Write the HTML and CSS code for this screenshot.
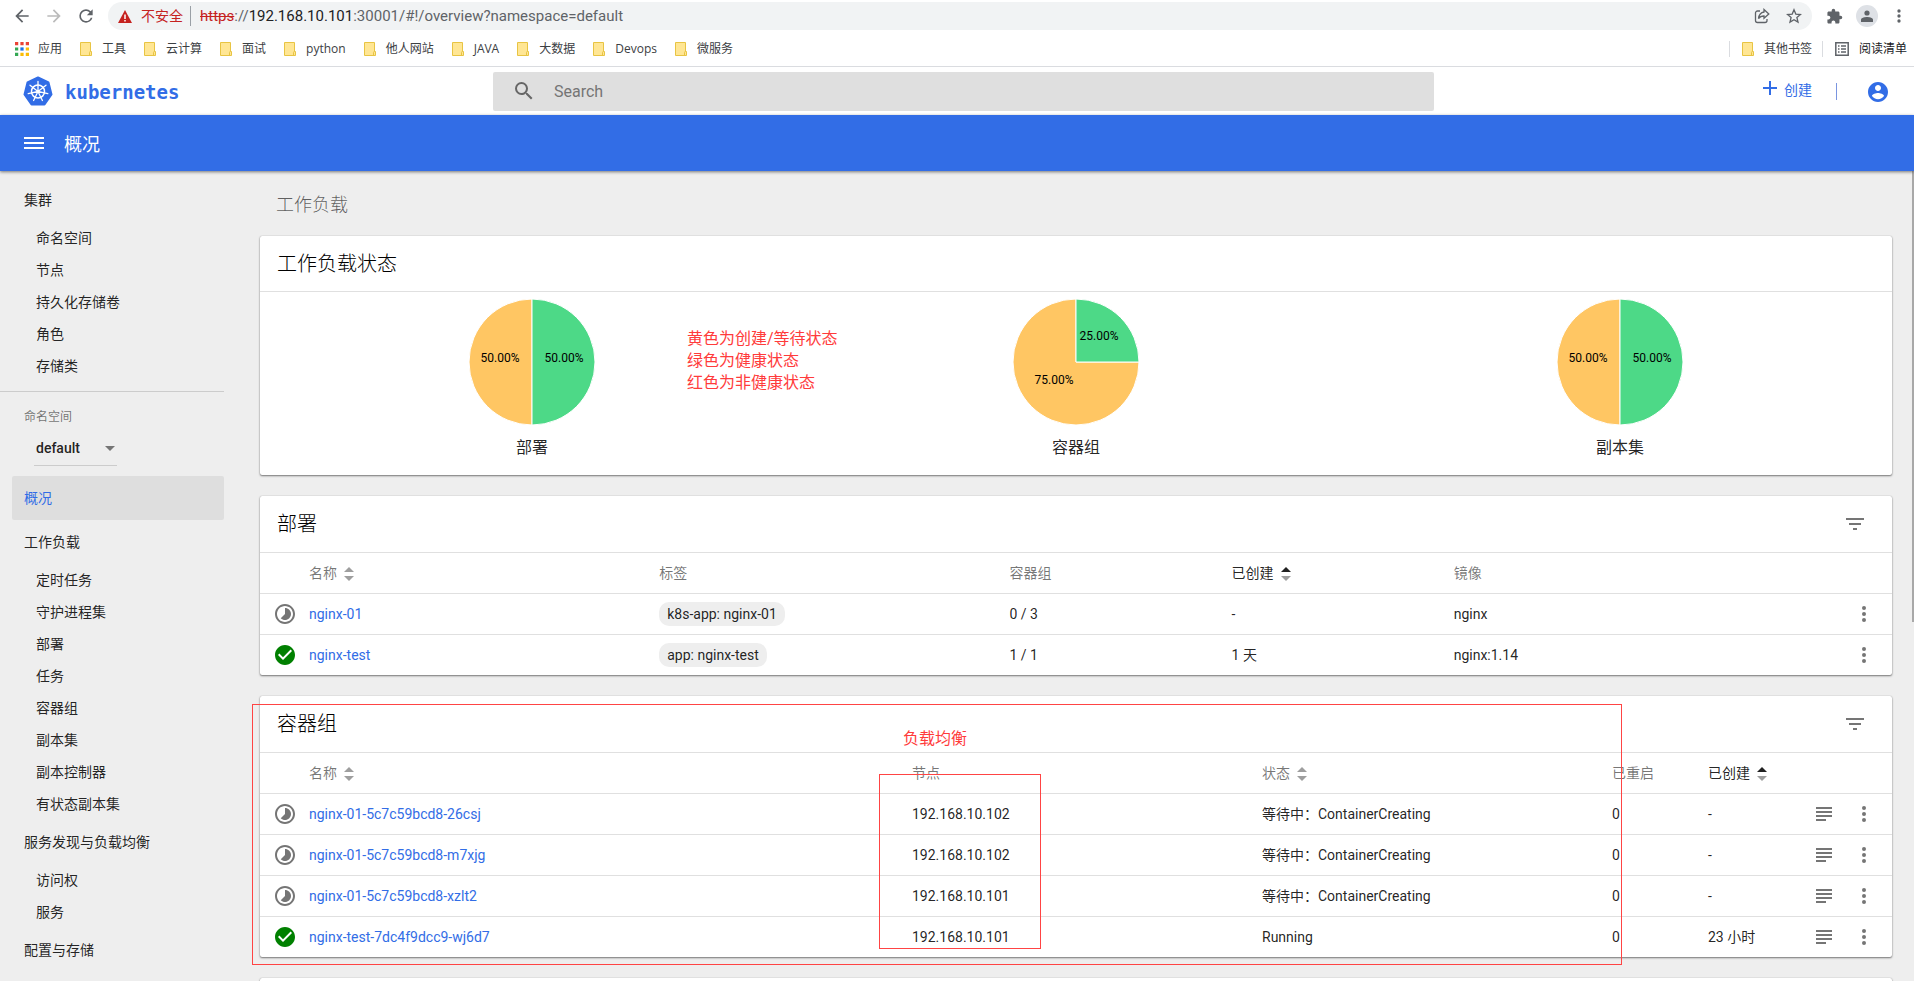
FILE: index.html
```html
<!DOCTYPE html>
<html lang="zh-CN">
<head>
<meta charset="utf-8">
<title>Kubernetes Dashboard</title>
<link rel="stylesheet" href="styles.css">
</head>
<body>
<svg class="sprite" aria-hidden="true">
  <symbol id="i-back" viewBox="0 0 24 24"><path d="M20 11H7.83l5.59-5.59L12 4l-8 8 8 8 1.41-1.41L7.83 13H20v-2z"/></symbol>
  <symbol id="i-forward" viewBox="0 0 24 24"><path d="M4 13h12.17l-5.59 5.59L12 20l8-8-8-8-1.41 1.41L16.17 11H4v2z"/></symbol>
  <symbol id="i-refresh" viewBox="0 0 24 24"><path d="M17.65 6.35A7.958 7.958 0 0 0 12 4a8 8 0 1 0 7.73 10h-2.08A5.99 5.99 0 0 1 12 18c-3.31 0-6-2.69-6-6s2.69-6 6-6c1.66 0 3.14.69 4.22 1.78L13 11h7V4l-2.35 2.35z"/></symbol>
  <symbol id="i-folder" viewBox="0 0 12 14"><path d="M.5.5h10v9h1v4H.5z" fill="#ffe694" stroke="#e8c443"/><path d="M9.500 13V10.500q0-1 1-1" stroke="#e8c443" fill="none"/></symbol>
  <symbol id="i-pending" viewBox="0 0 24 24"><path d="M16.24 7.76C15.07 6.59 13.54 6 12 6v6l-4.24 4.24c2.34 2.34 6.14 2.34 8.49 0 2.34-2.34 2.34-6.14-.01-8.48zM12 2C6.48 2 2 6.48 2 12s4.480 10 10 10 10-4.480 10-10S17.520 2 12 2zm0 18c-4.420 0-8-3.580-8-8s3.580-8 8-8 8 3.580 8 8-3.580 8-8 8z"/></symbol>
  <symbol id="i-ok" viewBox="0 0 24 24"><path d="M12 2C6.480 2 2 6.480 2 12s4.480 10 10 10 10-4.480 10-10S17.520 2 12 2zm-2 15l-5-5 1.410-1.410L10 14.170l7.590-7.590L19 8l-9 9z"/></symbol>
  <symbol id="i-filter" viewBox="0 0 24 24"><path d="M10 18h4v-2h-4v2zM3 6v2h18V6H3zm3 7h12v-2H6v2z"/></symbol>
  <symbol id="i-logs" viewBox="0 0 24 24"><path d="M14 17H4v2h10v-2zm6-8H4v2h16V9zM4 15h16v-2H4v2zM4 5v2h16V5H4z"/></symbol>
  <symbol id="i-more" viewBox="0 0 24 24"><path d="M12 8a2 2 0 1 0 0-4 2 2 0 0 0 0 4zm0 2a2 2 0 1 0 0 4 2 2 0 0 0 0-4zm0 6a2 2 0 1 0 0 4 2 2 0 0 0 0-4z"/></symbol>
  <symbol id="i-sort" viewBox="0 0 10 14"><path class="up" d="M5 0l5 5H0z"/><path d="M5 14L0 9h10z"/></symbol>
</svg>

<header class="browser">
  <div class="toolbar">
    <button class="nav" aria-label="后退"><svg><use href="#i-back"/></svg></button>
    <button class="nav disabled" aria-label="前进"><svg><use href="#i-forward"/></svg></button>
    <button class="nav" aria-label="重新加载"><svg><use href="#i-refresh"/></svg></button>
    <div class="omnibox">
      <svg class="warn" viewBox="0 0 14 13"><path d="M7 0l7 13H0z" fill="#c5221f"/><path d="M7 4.500v4.500M7 10v1.500" stroke="#fff" stroke-width="1.500"/></svg>
      <span class="insecure">不安全</span>
      <span class="url"><s>https</s>://<b>192.168.10.101</b>:30001/#!/overview?namespace=default</span>
      <button class="omni-btn" aria-label="分享"><svg viewBox="0 0 16 16" class="line"><path d="M6 3H3.500a2 2 0 0 0-2 2v7.500a2 2 0 0 0 2 2h7.500a2 2 0 0 0 2-2V11"/><path d="M10 1.500L14.800 6 10 10.300V8C7.500 8 5.800 8.700 4.500 10.500 5 7 6.800 4.500 10 4z"/></svg></button>
      <button class="omni-btn" aria-label="收藏"><svg viewBox="0 0 16 16" class="line"><path d="M8 1.800l1.800 4.300 4.700.4-3.600 3 1.100 4.600L8 11.700l-4 2.400 1.100-4.600-3.600-3 4.700-.4z"/></svg></button>
    </div>
    <button class="ext" aria-label="扩展程序"><svg viewBox="0 0 24 24"><path d="M20.500 11H19V7c0-1.100-.9-2-2-2h-4V3.500a2.500 2.500 0 0 0-5 0V5H4c-1.100 0-2 .9-2 2v3.800h1.500c1.490 0 2.700 1.210 2.700 2.700s-1.210 2.700-2.700 2.700H2V20c0 1.100.9 2 2 2h3.800v-1.500c0-1.490 1.210-2.700 2.700-2.700s2.700 1.210 2.700 2.700V22H17c1.100 0 2-.9 2-2v-4h1.500a2.500 2.500 0 0 0 0-5z"/></svg></button>
    <button class="avatar" aria-label="用户"><svg viewBox="0 0 12 12"><circle cx="6" cy="3" r="2.600"/><path d="M0 12V9.800C0 7.800 3.500 7 6 7s6 .8 6 2.800V12z"/></svg></button>
    <button class="chrome-more" aria-label="菜单"><svg><use href="#i-more"/></svg></button>
  </div>
  <nav class="bookmarks">
    <a href="#" class="apps"><svg viewBox="0 0 13 13"><path fill="#ea4335" d="M0 0h3v3H0zM5 0h3v3H5zM10 0h3v3h-3z"/><path fill="#34a853" d="M0 5h3v3H0zM0 10h3v3H0z"/><path fill="#1a73e8" d="M5 5h3v3H5z"/><path fill="#fbbc04" d="M10 5h3v3h-3zM5 10h3v3H5zM10 10h3v3h-3z"/></svg>应用</a>
    <a href="#"><svg><use href="#i-folder"/></svg>工具</a>
    <a href="#"><svg><use href="#i-folder"/></svg>云计算</a>
    <a href="#"><svg><use href="#i-folder"/></svg>面试</a>
    <a href="#"><svg><use href="#i-folder"/></svg>python</a>
    <a href="#"><svg><use href="#i-folder"/></svg>他人网站</a>
    <a href="#"><svg><use href="#i-folder"/></svg>JAVA</a>
    <a href="#"><svg><use href="#i-folder"/></svg>大数据</a>
    <a href="#"><svg><use href="#i-folder"/></svg>Devops</a>
    <a href="#"><svg><use href="#i-folder"/></svg>微服务</a>
    <a href="#" class="other"><svg><use href="#i-folder"/></svg>其他书签</a>
    <a href="#" class="reading"><svg viewBox="0 0 14 14"><path fill="none" stroke="#5f6368" stroke-width="1.500" d="M.8.800h12.400v12.400H.8z"/><path stroke="#5f6368" stroke-width="1.400" d="M3 4h1.500M6 4h5M3 7h1.500M6 7h5M3 10h1.500M6 10h5"/></svg>阅读清单</a>
  </nav>
</header>

<div class="masthead">
  <a href="#" class="brand">
    <svg viewBox="0 0 30 30"><path fill="#326de6" stroke="#326de6" stroke-width="2" stroke-linejoin="round" d="M15 1.500L25.500 6.500 28.500 18.500 21.500 28.500h-13L1.500 18.500 4.500 6.500z"/>
      <g stroke="#fff" fill="none" stroke-width="1.500"><circle cx="15" cy="15.500" r="6.500"/><path stroke-width="1.300" stroke-linecap="round" d="M15 15.500V5.500M15 15.500l8-6.300M15 15.500l9.800 2.200M15 15.500l4.400 9M15 15.500l-4.400 9M15 15.500l-9.800 2.200M15 15.500l-8-6.300"/></g><circle cx="15" cy="15.500" r="1.600" fill="#fff"/></svg>
    <span>kubernetes</span>
  </a>
  <label class="search">
    <svg viewBox="0 0 24 24"><path d="M15.500 14h-.79l-.28-.27A6.471 6.471 0 0 0 16 9.500 6.500 6.500 0 1 0 9.500 16c1.610 0 3.090-.59 4.230-1.570l.27.28v.79l5 4.990L20.490 19l-4.990-5zm-6 0C7.010 14 5 11.990 5 9.500S7.010 5 9.500 5 14 7.010 14 9.500 11.990 14 9.500 14z"/></svg>
    <input type="text" placeholder="Search" aria-label="Search">
  </label>
  <div class="account">
    <button class="create"><svg viewBox="0 0 14 14"><path d="M7 0v14M0 7h14"/></svg>创建</button>
    <span class="bar"></span>
    <button class="user" aria-label="账户"><svg viewBox="0 0 24 24"><path d="M12 2C6.480 2 2 6.480 2 12s4.480 10 10 10 10-4.480 10-10S17.520 2 12 2zm0 3c1.660 0 3 1.340 3 3s-1.340 3-3 3-3-1.340-3-3 1.340-3 3-3zm0 14.200c-2.500 0-4.710-1.280-6-3.220.03-1.990 4-3.080 6-3.080 1.990 0 5.970 1.090 6 3.080-1.290 1.940-3.500 3.220-6 3.220z"/></svg></button>
  </div>
</div>

<div class="actionbar">
  <button aria-label="导航"><svg viewBox="0 0 20 12"><path d="M0 0h20v2H0zM0 5h20v2H0zM0 10h20v2H0z"/></svg></button>
  <h1>概况</h1>
</div>

<div class="page">
  <nav class="sidebar">
    <a href="#" class="group">集群</a>
    <a href="#">命名空间</a>
    <a href="#">节点</a>
    <a href="#">持久化存储卷</a>
    <a href="#">角色</a>
    <a href="#">存储类</a>
    <div class="namespace">
      <label for="ns">命名空间</label>
      <div class="picker">
        <select id="ns"><option>default</option></select>
        <svg viewBox="0 0 10 5"><path d="M0 0h10L5 5z"/></svg>
      </div>
    </div>
    <a href="#" class="group active">概况</a>
    <a href="#" class="group">工作负载</a>
    <a href="#">定时任务</a>
    <a href="#">守护进程集</a>
    <a href="#">部署</a>
    <a href="#">任务</a>
    <a href="#">容器组</a>
    <a href="#">副本集</a>
    <a href="#">副本控制器</a>
    <a href="#">有状态副本集</a>
    <a href="#" class="group">服务发现与负载均衡</a>
    <a href="#">访问权</a>
    <a href="#">服务</a>
    <a href="#" class="group">配置与存储</a>
  </nav>

  <main class="content">
    <h2>工作负载</h2>

    <section class="card summary">
      <header><h3>工作负载状态</h3></header>
      <div class="charts">
        <figure>
          <svg viewBox="0 0 128 128"><path class="wait" d="M64 64V127A63 63 0 0 1 64 1z"/><path class="good" d="M64 64V1A63 63 0 0 1 64 127z"/><text x="32" y="64">50.00%</text><text x="96" y="64">50.00%</text></svg>
          <figcaption>部署</figcaption>
        </figure>
        <figure>
          <svg viewBox="0 0 128 128"><path class="wait" d="M64 64H127A63 63 0 1 1 64 1z"/><path class="good" d="M64 64V1A63 63 0 0 1 127 64z"/><text x="87" y="42">25.00%</text><text x="42" y="86">75.00%</text></svg>
          <figcaption>容器组</figcaption>
        </figure>
        <figure>
          <svg viewBox="0 0 128 128"><path class="wait" d="M64 64V127A63 63 0 0 1 64 1z"/><path class="good" d="M64 64V1A63 63 0 0 1 64 127z"/><text x="32" y="64">50.00%</text><text x="96" y="64">50.00%</text></svg>
          <figcaption>副本集</figcaption>
        </figure>
      </div>
      <p class="note legend">黄色为创建/等待状态<br>绿色为健康状态<br>红色为非健康状态</p>
    </section>

    <section class="card">
      <header><h3>部署</h3><button aria-label="筛选"><svg><use href="#i-filter"/></svg></button></header>
      <table>
        <colgroup><col class="c-icon"><col class="c-wide"><col class="c-wide"><col class="c-mid"><col class="c-mid"><col class="c-image"><col class="c-action"></colgroup>
        <thead><tr><th></th><th>名称<svg class="sort"><use href="#i-sort"/></svg></th><th>标签</th><th>容器组</th><th class="sorted">已创建<svg class="sort"><use href="#i-sort"/></svg></th><th>镜像</th><th></th></tr></thead>
        <tbody>
          <tr><td class="status"><svg><use href="#i-pending"/></svg></td><td><a href="#">nginx-01</a></td><td><span class="chip">k8s-app: nginx-01</span></td><td>0 / 3</td><td>-</td><td>nginx</td><td class="act"><button aria-label="操作"><svg><use href="#i-more"/></svg></button></td></tr>
          <tr><td class="status ok"><svg><use href="#i-ok"/></svg></td><td><a href="#">nginx-test</a></td><td><span class="chip">app: nginx-test</span></td><td>1 / 1</td><td>1 天</td><td>nginx:1.14</td><td class="act"><button aria-label="操作"><svg><use href="#i-more"/></svg></button></td></tr>
        </tbody>
      </table>
    </section>

    <section class="card">
      <header><h3>容器组</h3><button aria-label="筛选"><svg><use href="#i-filter"/></svg></button></header>
      <table>
        <colgroup><col class="c-icon"><col class="c-pod"><col class="c-wide"><col class="c-wide"><col class="c-restarts"><col class="c-created"><col class="c-action"><col class="c-action"></colgroup>
        <thead><tr><th></th><th>名称<svg class="sort"><use href="#i-sort"/></svg></th><th>节点</th><th>状态<svg class="sort"><use href="#i-sort"/></svg></th><th>已重启</th><th class="sorted">已创建<svg class="sort"><use href="#i-sort"/></svg></th><th></th><th></th></tr></thead>
        <tbody>
          <tr><td class="status"><svg><use href="#i-pending"/></svg></td><td><a href="#">nginx-01-5c7c59bcd8-26csj</a></td><td>192.168.10.102</td><td>等待中：ContainerCreating</td><td>0</td><td>-</td><td class="act"><button aria-label="日志"><svg><use href="#i-logs"/></svg></button></td><td class="act"><button aria-label="操作"><svg><use href="#i-more"/></svg></button></td></tr>
          <tr><td class="status"><svg><use href="#i-pending"/></svg></td><td><a href="#">nginx-01-5c7c59bcd8-m7xjg</a></td><td>192.168.10.102</td><td>等待中：ContainerCreating</td><td>0</td><td>-</td><td class="act"><button aria-label="日志"><svg><use href="#i-logs"/></svg></button></td><td class="act"><button aria-label="操作"><svg><use href="#i-more"/></svg></button></td></tr>
          <tr><td class="status"><svg><use href="#i-pending"/></svg></td><td><a href="#">nginx-01-5c7c59bcd8-xzlt2</a></td><td>192.168.10.101</td><td>等待中：ContainerCreating</td><td>0</td><td>-</td><td class="act"><button aria-label="日志"><svg><use href="#i-logs"/></svg></button></td><td class="act"><button aria-label="操作"><svg><use href="#i-more"/></svg></button></td></tr>
          <tr><td class="status ok"><svg><use href="#i-ok"/></svg></td><td><a href="#">nginx-test-7dc4f9dcc9-wj6d7</a></td><td>192.168.10.101</td><td>Running</td><td>0</td><td>23 小时</td><td class="act"><button aria-label="日志"><svg><use href="#i-logs"/></svg></button></td><td class="act"><button aria-label="操作"><svg><use href="#i-more"/></svg></button></td></tr>
        </tbody>
      </table>
      <div class="frame frame-pods"></div>
      <div class="frame frame-nodes"></div>
      <p class="note balance">负载均衡</p>
    </section>

    <section class="card"><header></header></section>
  </main>
  <span class="thumb"></span>
</div>
</body>
</html>
```
FILE: styles.css
```css
* { box-sizing: border-box; }
body {
  margin: 0;
  height: 100vh;
  display: flex;
  flex-direction: column;
  overflow: hidden;
  background: #eee;
  color: rgba(0, 0, 0, .87);
  font: 14px/20px Roboto, "Noto Sans CJK SC", sans-serif;
}
h1, h2, h3, p, figure { margin: 0; font-weight: 400; }
a { color: inherit; text-decoration: none; }
button { padding: 0; border: 0; background: none; color: inherit; font: inherit; display: flex; align-items: center; }
svg { display: block; width: 24px; height: 24px; fill: currentColor; }
.sprite { position: absolute; width: 0; height: 0; }
.up { fill: var(--sort-up, #9e9e9e); }

.browser { flex: none; background: #fff; color: #3c4043; border-bottom: 1px solid #dadce0; font-family: "Open Sans", "Noto Sans CJK SC", sans-serif; }
.toolbar { height: 33px; display: flex; align-items: center; padding: 0 5px 1px 12px; color: #5f6368; }
.nav { width: 20px; margin-right: 12px; }
.nav svg { width: 20px; height: 20px; }
.disabled { color: #bbb; }
.omnibox { flex: 1; height: 28px; display: flex; align-items: center; padding: 0 10px; border-radius: 14px; background: #f1f3f4; }
.warn { width: 14px; height: 13px; }
.insecure { margin-left: 9px; padding-right: 7px; border-right: 1px solid #9aa0a6; color: #c5221f; line-height: 20px; }
.url { flex: 1; margin-left: 9px; font: 15px/20px Roboto, sans-serif; }
.url s { color: #c5221f; }
.url b { color: #202124; font-weight: 400; }
.omni-btn { margin-left: 16px; }
.omni-btn svg { width: 16px; height: 16px; }
.line { fill: none; stroke: #5f6368; stroke-width: 1.3; }
.ext { margin-left: 14px; }
.ext svg { width: 17px; height: 17px; }
.avatar { width: 22px; height: 22px; margin: 0 11px 0 13px; justify-content: center; border-radius: 50%; background: #dee1e6; }
.avatar svg { width: 12px; height: 12px; }
.chrome-more svg { width: 20px; height: 20px; }

.bookmarks { height: 33px; display: flex; align-items: center; gap: 18px; padding: 0 7px 2px 15px; font-size: 12px; line-height: 16px; }
.bookmarks a { display: flex; align-items: center; gap: 10px; white-space: nowrap; }
.bookmarks svg { width: 12px; height: 14px; }
.bookmarks .apps svg, .bookmarks .reading svg { width: 14px; }
.bookmarks .apps { gap: 9px; }
.bookmarks .other { margin-left: auto; padding-left: 12px; border-left: 1px solid #dadce0; }
.bookmarks .reading { margin-left: -8px; padding-left: 12px; border-left: 1px solid #dadce0; color: #202124; }

.masthead { flex: none; height: 48px; display: flex; align-items: center; background: #fff; color: #326de6; }
.brand { width: 493px; display: flex; align-items: center; gap: 12px; padding-left: 23px; }
.brand svg { width: 30px; height: 30px; }
.brand span { padding-top: 2px; font: 700 19px/24px "DejaVu Sans Mono", monospace; }
.search { flex: 1; height: 39px; display: flex; align-items: center; padding-left: 19px; border-radius: 2px; background: #dfdfdf; color: #666; }
.search input { flex: 1; margin-left: 18px; padding: 2px 0 0; border: 0; outline: 0; background: none; font: 16px/24px Roboto, sans-serif; }
.search input::placeholder { color: #757575; opacity: 1; }
.account { width: 480px; display: flex; align-items: center; justify-content: flex-end; padding-right: 24px; }
.create { gap: 7px; padding-bottom: 2px; }
.create svg { width: 14px; height: 14px; stroke: #326de6; stroke-width: 2; margin-bottom: 4px; }
.bar { width: 1px; height: 17px; margin: 0 29px 0 24px; background: #7a95e0; }
.user { padding-top: 2px; }

.actionbar { flex: none; height: 56px; display: flex; align-items: center; gap: 20px; padding-left: 24px; background: #326de6; color: #fff; box-shadow: 0 1px 3px rgba(0, 0, 0, .5); z-index: 1; }
.actionbar svg { width: 20px; height: 12px; }
.actionbar h1 { padding-top: 4px; font-size: 18px; line-height: 24px; }

.page { flex: 1; min-height: 0; display: flex; position: relative; overflow: hidden; }
.sidebar { flex: none; width: 224px; padding-top: 7px; }
.sidebar a { display: block; padding-left: 36px; line-height: 32px; }
.sidebar .group { padding-left: 24px; line-height: 44px; }
.sidebar .active { margin-left: 12px; padding-left: 12px; border-radius: 2px; background: #dedede; color: #326de6; }
.namespace { margin-top: 9px; padding: 15px 0 10px 24px; border-top: 1px solid #ccc; }
.namespace label { display: block; font-size: 12px; line-height: 20px; color: rgba(0, 0, 0, .54); }
.picker { width: 83px; height: 39px; display: flex; align-items: center; margin-left: 10px; padding: 4px 2px 0; border-bottom: 1px solid #ccc; }
.picker select { flex: 1; min-width: 0; appearance: none; padding: 0; border: 0; background: none; color: inherit; font: 500 14px/20px Roboto, sans-serif; }
.picker svg { width: 10px; height: 5px; color: #757575; }

.content { flex: 1; min-width: 0; padding: 22px 22px 0 36px; }
.content h2 { padding-left: 16px; margin-bottom: 19px; font-size: 18px; line-height: 24px; color: rgba(0, 0, 0, .62); font-weight: 300; }
.card { position: relative; margin-bottom: 21px; background: #fff; border-radius: 2px; box-shadow: 0 1px 2px rgba(0, 0, 0, .5), 0 0 1px rgba(0, 0, 0, .3); }
.card header { height: 56px; display: flex; align-items: center; justify-content: space-between; padding: 0 25px 0 17px; }
.summary header { height: 55px; }
.card h3 { font-size: 20px; line-height: 28px; font-weight: 300; color: #000; }
.card header button { color: #757575; }
.charts { display: grid; grid-template-columns: repeat(3, 1fr); border-top: 1px solid #e0e0e0; padding: 6px 0 15px; }
figure { display: flex; flex-direction: column; align-items: center; }
figure svg { width: 128px; height: 128px; }
figure path { stroke: #fff; }
figure text { fill: #000; font: 12px Roboto, sans-serif; text-anchor: middle; }
.wait { fill: #ffc663; }
.good { fill: #4dd987; }
figcaption { margin-top: 10px; font-size: 16px; line-height: 24px; }

table { width: 100%; table-layout: fixed; border-collapse: separate; border-spacing: 0; }
.c-icon { width: 49px; }
.c-wide { width: 350px; }
.c-mid { width: 222px; }
.c-image { width: 398px; }
.c-pod { width: 603px; }
.c-restarts { width: 96px; }
.c-created { width: 104px; }
.c-action { width: 40px; }
th, td { height: 41px; padding: 0; border-top: 1px solid #e0e0e0; text-align: left; white-space: nowrap; }
th { font-weight: 400; color: rgba(0, 0, 0, .54); }
td a { color: #326de6; }
.sorted { color: rgba(0, 0, 0, .87); --sort-up: #212121; }
.sort { display: inline-block; width: 10px; height: 14px; margin-left: 7px; vertical-align: -3px; color: #9e9e9e; }
.status { padding-left: 13px; color: #757575; }
.ok { color: #008000; }
.act { color: #757575; }
.chip { display: inline-block; padding: 2px 8px; border-radius: 10px; background: #eee; }

.note { position: absolute; color: #ff3b3b; font-size: 16px; line-height: 22px; white-space: nowrap; }
.legend { left: 427px; top: 92px; }
.balance { left: 643px; top: 32px; }
.frame { position: absolute; border: 1px solid #f44; pointer-events: none; }
.frame-pods { left: -8px; top: 8px; width: 1370px; height: 261px; }
.frame-nodes { left: 619px; top: 78px; width: 162px; height: 175px; }
.thumb { position: absolute; right: 0; top: 0; width: 2px; height: 451px; background: #a8a8a8; }
```
